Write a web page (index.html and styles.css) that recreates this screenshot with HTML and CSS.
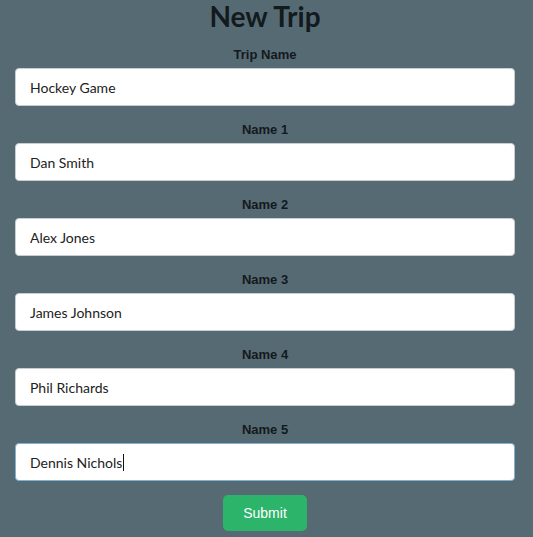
FILE: index.html
```html
<!DOCTYPE html>
<html>
<head>
<meta charset="utf-8">
<link rel="stylesheet" href="styles.css">
</head>
<body>
<form class="trip-form">
  <h1 class="title">New Trip</h1>
  <label class="field-label first">Trip Name</label>
  <input class="field" type="text" value="Hockey Game">
  <label class="field-label">Name 1</label>
  <input class="field" type="text" value="Dan Smith">
  <label class="field-label">Name 2</label>
  <input class="field" type="text" value="Alex Jones">
  <label class="field-label">Name 3</label>
  <input class="field" type="text" value="James Johnson">
  <label class="field-label">Name 4</label>
  <input class="field" type="text" value="Phil Richards">
  <label class="field-label">Name 5</label>
  <div class="focused-wrap"><span class="focused-text">Dennis Nichols</span><span class="caret"></span></div>
  <button class="submit" type="button">Submit</button>
</form>
</body>
</html>
```
FILE: styles.css
```css
html, body {
  margin: 0;
  padding: 0;
  background: #566a74;
}
.trip-form {
  width: 500px;
  margin-left: 15px;
  display: flex;
  flex-direction: column;
  align-items: center;
}
.title {
  margin: 0;
  height: 34px;
  padding-top: 1px;
  box-sizing: border-box;
  font-family: Lato, sans-serif;
  font-weight: 700;
  font-size: 28px;
  line-height: 30px;
  color: #121a1e;
}
.field-label {
  font-family: "Liberation Sans", Arial, sans-serif;
  font-weight: 700;
  font-size: 13px;
  line-height: 16px;
  height: 37px;
  padding-top: 16px;
  box-sizing: border-box;
  color: #14191c;
}
.field-label.first { height: 34px; padding-top: 13px; }
.field {
  width: 500px;
  height: 38px;
  box-sizing: border-box;
  border: 1px solid #c8cdd0;
  border-radius: 4px;
  background: #fff;
  padding: 0 14px;
  font-family: Lato, sans-serif;
  font-size: 14px;
  color: #222;
  outline: none;
}
.focused-wrap {
  width: 500px;
  height: 38px;
  box-sizing: border-box;
  border: 1px solid #7fb3d5;
  border-radius: 4px;
  background: #fff;
  padding: 0 14px;
  display: flex;
  align-items: center;
  font-family: Lato, sans-serif;
  font-size: 14px;
  color: #222;
}
.caret {
  width: 1px;
  height: 17px;
  background: #111;
  margin-left: 1px;
}
.submit {
  margin-top: 14px;
  width: 84px;
  height: 36px;
  border: none;
  border-radius: 5px;
  background: #2bb46a;
  color: #fff;
  font-family: "Liberation Sans", Arial, sans-serif;
  font-size: 14px;
}
```
